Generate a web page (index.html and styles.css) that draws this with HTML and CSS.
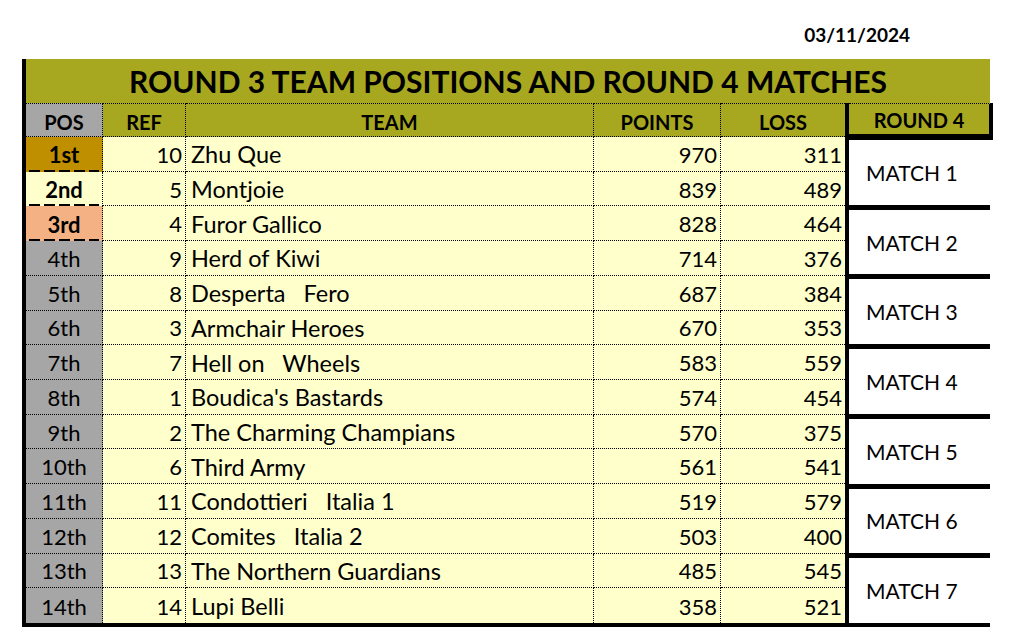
FILE: index.html
```html
<!DOCTYPE html>
<html lang="en">
<head>
<meta charset="utf-8">
<title>Round 3 Team Positions</title>
<link rel="stylesheet" href="styles.css">
</head>
<body>
<div class="page">
  <div class="date-row"><span class="date">03/11/2024</span></div>
  <div class="sheet">
    <div class="title">ROUND 3 TEAM POSITIONS AND ROUND 4 MATCHES</div>
    <div class="body">
      <div class="main">
        <div class="cell hd hd-pos">POS</div>
        <div class="cell hd">REF</div>
        <div class="cell hd">TEAM</div>
        <div class="cell hd">POINTS</div>
        <div class="cell hd last-col">LOSS</div>

        <div class="cell pos gold dash">1st</div><div class="cell num">10</div><div class="cell team">Zhu Que</div><div class="cell num">970</div><div class="cell num last-col">311</div>
        <div class="cell pos cream dash">2nd</div><div class="cell num">5</div><div class="cell team">Montjoie</div><div class="cell num">839</div><div class="cell num last-col">489</div>
        <div class="cell pos salmon dash">3rd</div><div class="cell num">4</div><div class="cell team">Furor Gallico</div><div class="cell num">828</div><div class="cell num last-col">464</div>
        <div class="cell pos grey">4th</div><div class="cell num">9</div><div class="cell team">Herd of Kiwi</div><div class="cell num">714</div><div class="cell num last-col">376</div>
        <div class="cell pos grey">5th</div><div class="cell num">8</div><div class="cell team">Desperta   Fero</div><div class="cell num">687</div><div class="cell num last-col">384</div>
        <div class="cell pos grey">6th</div><div class="cell num">3</div><div class="cell team">Armchair Heroes</div><div class="cell num">670</div><div class="cell num last-col">353</div>
        <div class="cell pos grey">7th</div><div class="cell num">7</div><div class="cell team">Hell on   Wheels</div><div class="cell num">583</div><div class="cell num last-col">559</div>
        <div class="cell pos grey">8th</div><div class="cell num">1</div><div class="cell team">Boudica's Bastards</div><div class="cell num">574</div><div class="cell num last-col">454</div>
        <div class="cell pos grey">9th</div><div class="cell num">2</div><div class="cell team">The Charming Champians</div><div class="cell num">570</div><div class="cell num last-col">375</div>
        <div class="cell pos grey">10th</div><div class="cell num">6</div><div class="cell team">Third Army</div><div class="cell num">561</div><div class="cell num last-col">541</div>
        <div class="cell pos grey">11th</div><div class="cell num">11</div><div class="cell team">Condottieri   Italia 1</div><div class="cell num">519</div><div class="cell num last-col">579</div>
        <div class="cell pos grey">12th</div><div class="cell num">12</div><div class="cell team">Comites   Italia 2</div><div class="cell num">503</div><div class="cell num last-col">400</div>
        <div class="cell pos grey">13th</div><div class="cell num">13</div><div class="cell team">The Northern Guardians</div><div class="cell num">485</div><div class="cell num last-col">545</div>
        <div class="cell pos grey last-row">14th</div><div class="cell num last-row">14</div><div class="cell team last-row">Lupi Belli</div><div class="cell num last-row">358</div><div class="cell num last-col last-row">521</div>
      </div>
      <div class="matches">
        <div class="match-hd">ROUND 4</div>
        <div class="match">MATCH 1</div>
        <div class="match">MATCH 2</div>
        <div class="match">MATCH 3</div>
        <div class="match">MATCH 4</div>
        <div class="match">MATCH 5</div>
        <div class="match">MATCH 6</div>
        <div class="match match-last">MATCH 7</div>
      </div>
    </div>
  </div>
</div>
</body>
</html>
```
FILE: styles.css
```css
* { box-sizing: border-box; }

body {
  margin: 0;
  background: #ffffff;
  color: #000000;
  font-family: Lato, "Liberation Sans", Arial, sans-serif;
}

.page {
  width: 968px;
  margin-left: 22px;
}

.date-row {
  height: 59px;
  display: flex;
  justify-content: flex-end;
  align-items: flex-start;
  padding-right: 80px;
}

.date {
  font-weight: 700;
  font-size: 19px;
  margin-top: 23px;
}

.sheet {
  width: 968px;
  border-left: 4px solid #000;
  border-bottom: 4px solid #000;
}

.title {
  height: 44px;
  background: #a8a820;
  text-align: center;
  font-weight: 700;
  font-size: 30px;
  line-height: 45px;
}

.body {
  display: flex;
  height: 520px;
}

.main {
  display: grid;
  grid-template-columns: 77px 83px 408px 127px 124px;
  grid-template-rows: 34px repeat(14, 1fr);
}

.cell {
  display: flex;
  align-items: center;
  border-right: 1px dotted #000;
  border-bottom: 1px dotted #000;
  background: #ffffcc;
  font-size: 22px;
  padding-top: 1px;
  white-space: pre;
}

.last-col { border-right: none; }
.last-row { border-bottom: none; }

.hd {
  justify-content: center;
  background: #a8a820;
  border-top: 1px dotted #000;
  font-weight: 700;
  font-size: 20px;
  padding-top: 3px;
}

.hd-pos { background: #a6a6a6; }

.pos { justify-content: center; }
.grey { background: #a6a6a6; }
.gold { background: #bf8f00; font-weight: 700; }
.cream { background: #ffffcc; font-weight: 700; }
.salmon { background: #f4b183; font-weight: 700; }

.dash {
  border-bottom: none;
  background-image: repeating-linear-gradient(90deg, #000 0 11px, transparent 11px 15px);
  background-size: 70px 2px;
  background-position: 3px 100%;
  background-repeat: no-repeat;
}

.num {
  justify-content: flex-end;
  padding-right: 3px;
}

.team {
  justify-content: flex-start;
  padding-left: 5px;
  font-size: 23.5px;
}

.matches {
  width: 145px;
  border-left: 4px solid #000;
  display: flex;
  flex-direction: column;
}

.match-hd {
  flex: 0 0 37px;
  width: 144px;
  align-self: flex-start;
  display: flex;
  align-items: center;
  justify-content: center;
  background: #a8a820;
  border-top: 1px dotted #000;
  border-right: 4px solid #000;
  border-bottom: 6px solid #000;
  font-weight: 700;
  font-size: 20px;
  padding-top: 2px;
}

.match {
  flex: 1 1 0;
  display: flex;
  align-items: center;
  padding-left: 17px;
  background: #ffffff;
  border-bottom: 5px solid #000;
  font-size: 21px;
}

.match-last { border-bottom: none; }
```
